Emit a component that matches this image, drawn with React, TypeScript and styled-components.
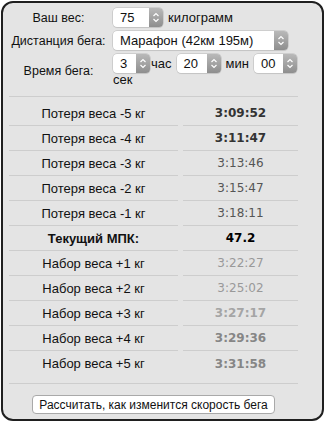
import React from "react";
import styled, { createGlobalStyle } from "styled-components";

const Global = createGlobalStyle`
  html, body {
    margin: 0;
    padding: 0;
    background: #ffffff;
  }
  body {
    font-family: "Liberation Sans", Arial, sans-serif;
    font-size: 13px;
    color: #111;
  }
`;

const Panel = styled.div`
  box-sizing: border-box;
  width: 323px;
  height: 420px;
  margin: 1px 0 0 1px;
  border: 2px solid #1f1f1f;
  border-radius: 12px;
  background: #e4e4e4;
  padding: 5px 0 0 6px;
`;

const Inner = styled.div`
  width: 289px;
`;

const Form = styled.div`
  display: grid;
  grid-template-columns: 99px 1fr;
  column-gap: 5px;
  row-gap: 4px;
  padding-bottom: 9px;
  border-bottom: 1px solid #cdcdcd;
`;

const Label = styled.div`
  display: flex;
  align-items: center;
  justify-content: center;
  white-space: nowrap;
  font-size: 12.5px;
`;

const Field = styled.div<{ $wrap?: boolean }>`
  display: flex;
  align-items: center;
  flex-wrap: ${(p) => (p.$wrap ? "wrap" : "nowrap")};
  gap: 0 5px;
  width: 185px;
  line-height: 14px;
`;

const SelectBox = styled.div<{ $w: number }>`
  box-sizing: border-box;
  width: ${(p) => p.$w}px;
  height: 19px;
  display: flex;
  align-items: stretch;
  background: #fff;
  border-radius: 4px;
  box-shadow: 0 0 0 0.5px #b8b8b8, 0 1px 1px rgba(0, 0, 0, 0.08);
  font-size: 13px;
  flex-shrink: 0;
`;

const SelectText = styled.span`
  flex: 1;
  display: flex;
  align-items: center;
  padding-left: 7px;
  white-space: nowrap;
  overflow: hidden;
`;

const Arrow = styled.span`
  width: 14px;
  display: flex;
  align-items: center;
  justify-content: center;
  border-radius: 0 4px 4px 0;
  background: linear-gradient(#b9b9b9, #8e8e8e);
`;

const Unit = styled.span<{ $tight?: boolean }>`
  margin-left: ${(p) => (p.$tight ? "-4px" : "0")};
  white-space: nowrap;
`;

const Results = styled.div`
  display: grid;
  grid-template-columns: 169px 1fr;
  column-gap: 5px;
  padding-top: 4px;
`;

const Cell = styled.div<{ $last?: boolean; $bold?: boolean }>`
  height: 25px;
  box-sizing: border-box;
  display: flex;
  align-items: center;
  justify-content: center;
  border-bottom: ${(p) => (p.$last ? "none" : "1px solid #cdcdcd")};
  font-weight: ${(p) => (p.$bold ? 700 : 400)};
`;

const tones: Record<string, { c: string; w: number }> = {
  strong: { c: "#333", w: 700 },
  plain: { c: "#555", w: 400 },
  main: { c: "#000", w: 700 },
  light: { c: "#999", w: 400 },
  faded: { c: "#a5a5a5", w: 700 },
  muted: { c: "#868686", w: 700 },
};

const Time = styled(Cell)<{ $tone: string }>`
  font-family: "DejaVu Sans", Verdana, sans-serif;
  font-size: 12px;
  color: ${(p) => tones[p.$tone].c};
  font-weight: ${(p) => tones[p.$tone].w};
`;

const Rule = styled.div`
  margin-top: 7px;
  border-top: 1px solid #cdcdcd;
`;

const Footer = styled.div`
  display: flex;
  justify-content: center;
  padding-top: 11px;
`;

const Button = styled.button`
  box-sizing: border-box;
  width: 243px;
  height: 19px;
  padding: 0;
  background: #fff;
  border: 1px solid #a9a9a9;
  border-radius: 4px;
  font-family: "Liberation Sans", Arial, sans-serif;
  font-size: 12px;
  color: #111;
  line-height: 16px;
  white-space: nowrap;
`;

function Chevrons() {
  return (
    <svg width="8" height="11" viewBox="0 0 8 11">
      <path d="M1.5 4 L4 1.5 L6.5 4 M1.5 7 L4 9.5 L6.5 7" fill="none" stroke="#fff" strokeWidth="1.2" />
    </svg>
  );
}

function Select({ width, value }: { width: number; value: string }) {
  return (
    <SelectBox $w={width}>
      <SelectText>{value}</SelectText>
      <Arrow>
        <Chevrons />
      </Arrow>
    </SelectBox>
  );
}

const rows = [
  { label: "Потеря веса -5 кг", time: "3:09:52", tone: "strong" },
  { label: "Потеря веса -4 кг", time: "3:11:47", tone: "strong" },
  { label: "Потеря веса -3 кг", time: "3:13:46", tone: "plain" },
  { label: "Потеря веса -2 кг", time: "3:15:47", tone: "plain" },
  { label: "Потеря веса -1 кг", time: "3:18:11", tone: "plain" },
  { label: "Текущий МПК:", time: "47.2", tone: "main", bold: true },
  { label: "Набор веса +1 кг", time: "3:22:27", tone: "light" },
  { label: "Набор веса +2 кг", time: "3:25:02", tone: "light" },
  { label: "Набор веса +3 кг", time: "3:27:17", tone: "faded" },
  { label: "Набор веса +4 кг", time: "3:29:36", tone: "muted" },
  { label: "Набор веса +5 кг", time: "3:31:58", tone: "muted" },
];

export default function App() {
  return (
    <>
      <Global />
      <Panel>
        <Inner>
          <Form>
            <Label>Ваш вес:</Label>
            <Field>
              <Select width={50} value="75" />
              <Unit>килограмм</Unit>
            </Field>
            <Label>Дистанция бега:</Label>
            <Field>
              <Select width={175} value="Марафон (42км 195м)" />
            </Field>
            <Label>Время бега:</Label>
            <Field $wrap>
              <Select width={37} value="3" />
              <Unit $tight>час</Unit>
              <Select width={44} value="20" />
              <Unit>мин</Unit>
              <Select width={43} value="00" />
              <Unit>сек</Unit>
            </Field>
          </Form>
          <Results>
            {rows.map((r, i) => (
              <React.Fragment key={r.label}>
                <Cell $last={i === rows.length - 1} $bold={r.bold}>
                  {r.label}
                </Cell>
                <Time $last={i === rows.length - 1} $tone={r.tone}>
                  {r.time}
                </Time>
              </React.Fragment>
            ))}
          </Results>
          <Rule />
          <Footer>
            <Button>Рассчитать, как изменится скорость бега</Button>
          </Footer>
        </Inner>
      </Panel>
    </>
  );
}
